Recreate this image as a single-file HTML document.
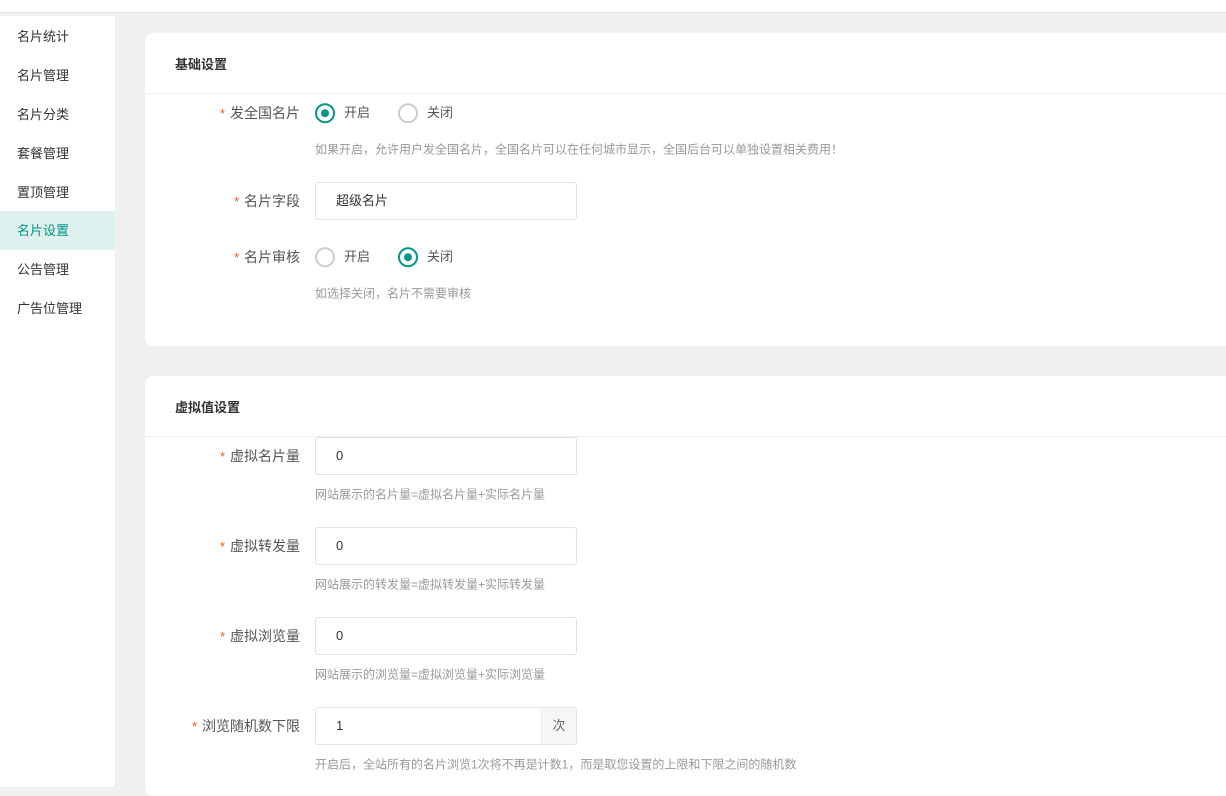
<!DOCTYPE html>
<html><head><meta charset="utf-8"><style>
*{margin:0;padding:0;box-sizing:border-box}
body{width:1226px;height:787px;overflow:hidden;background:#f0f0f0;font-family:"Liberation Sans","Noto Sans CJK SC",sans-serif;position:relative;color:#333}
.top{position:absolute;left:0;top:0;width:1226px;height:13px;background:#fff;border-bottom:1px solid #e2e2e2}
.side{position:absolute;left:0;top:16px;width:115px;height:771px;background:#fff}
.side div{position:absolute;left:0;width:115px;height:39px;line-height:39px;padding-left:17px;font-size:13px;color:#333}
.side .on{background:#dff1ee;color:#009688}
.card{position:absolute;left:145px;width:1090px;background:#fff;border-radius:8px}
.hd{position:absolute;left:30px;font-size:13px;font-weight:bold;color:#333}
.line{position:absolute;left:0;right:0;height:1px;background:#f0f0f0}
.lbl{position:absolute;right:935px;font-size:14px;color:#555;white-space:nowrap;transform:translateY(-50%)}
.lbl b{color:#ff5722;font-weight:normal;margin-right:5px;font-size:13px}
.inp{position:absolute;left:170px;width:262px;height:38px;border:1px solid #e2e2e2;border-radius:3px;font-size:13px;line-height:36px;padding-left:20px;color:#333}
.suf{position:absolute;right:0;top:0;width:35px;height:36px;background:#f5f6f8;border-left:1px solid #eee;text-align:center;color:#666}
.hint{position:absolute;left:170px;font-size:12px;color:#999;white-space:nowrap;transform:translateY(-50%)}
.rad{position:absolute;font-size:13px;color:#555;transform:translateY(-50%);white-space:nowrap}
.rad i{display:inline-block;width:20px;height:20px;border:2px solid #ccc;border-radius:50%;vertical-align:middle;margin-right:9px;position:relative;top:-1px}
.rad i.c{border-color:#009688}
.rad i.c:after{content:"";position:absolute;left:4px;top:4px;width:8px;height:8px;border-radius:50%;background:#009688}
</style></head><body>
<div class="top"></div>
<div class="side">
<div style="top:1px">名片统计</div>
<div style="top:40px">名片管理</div>
<div style="top:79px">名片分类</div>
<div style="top:118px">套餐管理</div>
<div style="top:157px">置顶管理</div>
<div class="on" style="top:195px">名片设置</div>
<div style="top:234px">公告管理</div>
<div style="top:273px">广告位管理</div>
</div>

<div class="card" style="top:33px;height:313px">
<div class="hd" style="top:21px">基础设置</div>
<div class="line" style="top:60px"></div>
<div class="lbl" style="top:80px"><b>*</b>发全国名片</div>
<div class="rad" style="left:170px;top:80px"><i class="c"></i>开启</div>
<div class="rad" style="left:253px;top:80px"><i></i>关闭</div>
<div class="hint" style="top:116px">如果开启，允许用户发全国名片，全国名片可以在任何城市显示，全国后台可以单独设置相关费用！</div>
<div class="lbl" style="top:168px"><b>*</b>名片字段</div>
<div class="inp" style="top:149px">超级名片</div>
<div class="lbl" style="top:224px"><b>*</b>名片审核</div>
<div class="rad" style="left:170px;top:224px"><i></i>开启</div>
<div class="rad" style="left:253px;top:224px"><i class="c"></i>关闭</div>
<div class="hint" style="top:260px">如选择关闭，名片不需要审核</div>
</div>

<div class="card" style="top:376px;height:420px">
<div class="hd" style="top:21px">虚拟值设置</div>
<div class="line" style="top:60px"></div>
<div class="lbl" style="top:80px"><b>*</b>虚拟名片量</div>
<div class="inp" style="top:61px">0</div>
<div class="hint" style="top:118px">网站展示的名片量=虚拟名片量+实际名片量</div>
<div class="lbl" style="top:170px"><b>*</b>虚拟转发量</div>
<div class="inp" style="top:151px">0</div>
<div class="hint" style="top:208px">网站展示的转发量=虚拟转发量+实际转发量</div>
<div class="lbl" style="top:260px"><b>*</b>虚拟浏览量</div>
<div class="inp" style="top:241px">0</div>
<div class="hint" style="top:298px">网站展示的浏览量=虚拟浏览量+实际浏览量</div>
<div class="lbl" style="top:350px"><b>*</b>浏览随机数下限</div>
<div class="inp" style="top:331px">1<span class="suf">次</span></div>
<div class="hint" style="top:388px">开启后，全站所有的名片浏览1次将不再是计数1，而是取您设置的上限和下限之间的随机数</div>
</div>
</body></html>
